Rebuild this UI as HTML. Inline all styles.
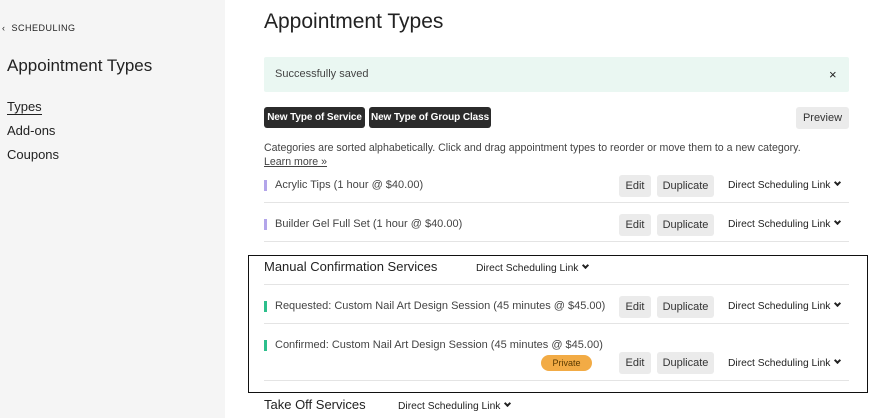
<!DOCTYPE html>
<html><head><style>
*{margin:0;padding:0;box-sizing:border-box}
body{width:880px;height:418px;overflow:hidden;background:#fff;font-family:"Liberation Sans",sans-serif;color:#222;position:relative}
.a{position:absolute;white-space:nowrap}
.side{left:0;top:0;width:225px;height:418px;background:#f5f5f5}
.btn{position:absolute;background:#ebebeb;border-radius:3px;font-size:11px;color:#333;text-align:center;line-height:22px;height:22px;white-space:nowrap}
.dk{position:absolute;background:#2b2b2b;color:#fff;font-size:10px;font-weight:bold;border-radius:3px;height:21px;line-height:21px;text-align:center;white-space:nowrap;letter-spacing:-.1px}
.line{position:absolute;left:264px;width:585px;height:1px;background:#e4e4e4}
.bar{position:absolute;left:264px;width:3px;height:11px}
.t{font-size:11px;color:#444}
.l{font-size:10.3px;color:#222}
.chev{display:inline-block;width:5px;height:5px;border-right:2px solid #222;border-bottom:2px solid #222;transform:rotate(45deg);margin-left:5px;position:relative;top:-3px}
</style></head><body>
<div class="a side"></div>
<div class="a" style="left:2px;top:23px;font-size:9px;letter-spacing:.5px;color:#222">&#8249;&nbsp; SCHEDULING</div>
<div class="a" style="left:7px;top:56px;font-size:17px">Appointment Types</div>
<div class="a" style="left:7px;top:99px;font-size:13px;border-bottom:1.5px solid #222;line-height:15px">Types</div>
<div class="a" style="left:7px;top:123px;font-size:13px">Add-ons</div>
<div class="a" style="left:7px;top:147px;font-size:13px">Coupons</div>

<div class="a" style="left:264px;top:10px;font-size:21px">Appointment Types</div>
<div class="a" style="left:264px;top:57px;width:585px;height:35px;background:#eaf7f2;border-radius:2px"></div>
<div class="a" style="left:275px;top:68px;font-size:11px;color:#444">Successfully saved</div>
<div class="a" style="left:829px;top:67px;font-size:13px">×</div>

<div class="dk" style="left:264px;top:107px;width:101px">New Type of Service</div>
<div class="dk" style="left:369px;top:107px;width:122px">New Type of Group Class</div>
<div class="btn" style="left:796px;top:107px;width:53px">Preview</div>

<div class="a t" style="left:264px;top:142px;font-size:10.6px">Categories are sorted alphabetically. Click and drag appointment types to reorder or move them to a new category.</div>
<div class="a t" style="left:264px;top:156px;text-decoration:underline;font-size:10.6px">Learn more »</div>

<div class="bar" style="top:180px;background:#b3a5ea"></div>
<div class="a t" style="left:275px;top:179px">Acrylic Tips (1 hour @ $40.00)</div>
<div class="btn" style="left:619px;top:175px;width:32px">Edit</div>
<div class="btn" style="left:657px;top:175px;width:57px">Duplicate</div>
<div class="a l" style="left:728px;top:180px">Direct Scheduling Link<span class="chev"></span></div>
<div class="line" style="top:202px"></div>

<div class="bar" style="top:219px;background:#b3a5ea"></div>
<div class="a t" style="left:275px;top:218px">Builder Gel Full Set (1 hour @ $40.00)</div>
<div class="btn" style="left:619px;top:214px;width:32px">Edit</div>
<div class="btn" style="left:657px;top:214px;width:57px">Duplicate</div>
<div class="a l" style="left:728px;top:219px">Direct Scheduling Link<span class="chev"></span></div>
<div class="line" style="top:241px"></div>

<div class="a" style="left:248px;top:255px;width:620px;height:138px;border:1.5px solid #111"></div>
<div class="a" style="left:264px;top:259px;font-size:13px">Manual Confirmation Services</div>
<div class="a l" style="left:476px;top:263px">Direct Scheduling Link<span class="chev"></span></div>
<div class="line" style="top:284px"></div>

<div class="bar" style="top:301px;background:#2dbf8c"></div>
<div class="a t" style="left:275px;top:300px">Requested: Custom Nail Art Design Session (45 minutes @ $45.00)</div>
<div class="btn" style="left:619px;top:296px;width:32px">Edit</div>
<div class="btn" style="left:657px;top:296px;width:57px">Duplicate</div>
<div class="a l" style="left:728px;top:301px">Direct Scheduling Link<span class="chev"></span></div>
<div class="line" style="top:323px"></div>

<div class="bar" style="top:340px;background:#2dbf8c"></div>
<div class="a t" style="left:275px;top:339px">Confirmed: Custom Nail Art Design Session (45 minutes @ $45.00)</div>
<div class="a" style="left:541px;top:355px;width:51px;height:16px;background:#f2ab45;border-radius:8px;font-size:9px;color:#5a3a00;text-align:center;line-height:16px">Private</div>
<div class="btn" style="left:619px;top:352px;width:32px">Edit</div>
<div class="btn" style="left:657px;top:352px;width:57px">Duplicate</div>
<div class="a l" style="left:728px;top:358px">Direct Scheduling Link<span class="chev"></span></div>
<div class="line" style="top:380px"></div>

<div class="a" style="left:264px;top:397px;font-size:13px">Take Off Services</div>
<div class="a l" style="left:398px;top:401px">Direct Scheduling Link<span class="chev"></span></div>
</body></html>
